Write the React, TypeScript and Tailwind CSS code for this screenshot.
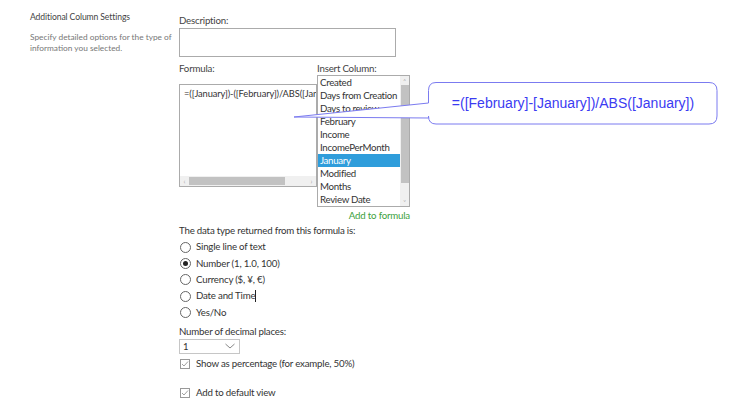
import React from "react";

const items = [
  "Created",
  "Days from Creation",
  "Days to review",
  "February",
  "Income",
  "IncomePerMonth",
  "January",
  "Modified",
  "Months",
  "Review Date",
];

const t = "text-[9.7px] tracking-[-0.2px]";

function Radio({ checked, label, cursor }: { checked?: boolean; label: string; cursor?: boolean }) {
  return (
    <div className="flex items-center h-[16.4px]">
      <span className="w-[11px] h-[11px] rounded-full border border-[#666] flex items-center justify-center ml-[1px]">
        {checked && <span className="w-[5px] h-[5px] rounded-full bg-[#222]" />}
      </span>
      <span className="ml-[5px] text-[9.7px] tracking-[-0.2px] text-[#333] leading-none">
        {label}
        {cursor && <span className="inline-block w-px h-[12px] bg-[#222] align-middle -mt-[2px]" />}
      </span>
    </div>
  );
}

function Check({ label }: { label: string }) {
  return (
    <div className="flex items-center">
      <span className="w-[10px] h-[10px] border border-[#999] ml-[1px] flex items-center justify-center">
        <svg width="8" height="8" viewBox="0 0 8 8">
          <path d="M1 4 L3 6 L7 1.5" fill="none" stroke="#888" strokeWidth="0.8" />
        </svg>
      </span>
      <span className="ml-[6px] text-[9.7px] tracking-[-0.2px] text-[#333] leading-none">{label}</span>
    </div>
  );
}

export default function App() {
  return (
    <div
      className="relative w-[736px] h-[409px] bg-white overflow-hidden flex"
      style={{ fontFamily: 'Lato, "Noto Sans", sans-serif' }}
    >
      <div className="w-[179px] pl-[30px] pt-[11px] shrink-0">
        <div className="text-[8.6px] tracking-[-0.1px] text-[#444] leading-[12px]">Additional Column Settings</div>
        <div className="mt-[9px] text-[8.3px] text-[#777] leading-[10.5px] w-[142px]">
          Specify detailed options for the type of information you selected.
        </div>
      </div>
      <div className={"flex flex-col pt-[13px] " + t}>
        <div className="text-[#444] leading-[14px]">Description:</div>
        <div className="mt-[1px] w-[217px] h-[29px] border border-[#ababab]" />
        <div className="mt-[4px] flex">
          <div className="flex flex-col w-[139px]">
            <div className="text-[#444] leading-[14px] h-[14px]">Formula:</div>
            <div className="mt-[9px] w-[138px] h-[103px] border border-[#ababab] flex flex-col">
              <div className="flex-1 overflow-hidden whitespace-nowrap text-[9.3px] tracking-[-0.1px] text-[#333] pl-[4px] pt-[3px] leading-[12px]">
                =([January])-([February])/ABS([January])
              </div>
              <div className="h-[10px] bg-[#f0f0f0] flex items-center">
                <span className="w-[9px] text-[7px] text-[#aaa] text-center leading-none">‹</span>
                <div className="w-[96px] h-[8px] bg-[#c2c2c2]" />
                <div className="flex-1" />
                <span className="w-[9px] text-[7px] text-[#aaa] text-center leading-none">›</span>
              </div>
            </div>
          </div>
          <div className="flex flex-col -ml-[1px]">
            <div className="text-[#444] leading-[14px] h-[14px]">Insert Column:</div>
            <div className="w-[93px] h-[132px] border border-[#ababab] flex">
              <div className="flex-1 flex flex-col overflow-hidden">
                {items.map((it) => (
                  <div
                    key={it}
                    className={
                      "h-[13px] leading-[13px] text-[9.7px] tracking-[-0.3px] whitespace-nowrap pl-[2px] " +
                      (it === "January" ? "bg-[#2f9ddb] text-white" : "text-[#333]")
                    }
                  >
                    {it}
                  </div>
                ))}
              </div>
              <div className="w-[9px] bg-[#f0f0f0] flex flex-col items-center">
                <span className="h-[9px] text-[6px] text-[#aaa] leading-[9px]">˄</span>
                <div className="w-[8px] flex-1 bg-[#c2c2c2] mb-[14px]" />
                <span className="h-[9px] text-[6px] text-[#aaa] leading-[9px]">˅</span>
              </div>
            </div>
            <div className="text-right text-[#3c9f3c] leading-[14px] mt-[1px]">Add to formula</div>
          </div>
        </div>
        <div className="mt-[1px] text-[#333] leading-[14px]">
          The data type returned from this formula is:
        </div>
        <div className="mt-[2px] flex flex-col">
          <Radio label="Single line of text" />
          <Radio checked label="Number (1, 1.0, 100)" />
          <Radio label="Currency ($, ¥, €)" />
          <Radio label="Date and Time" cursor />
          <Radio label="Yes/No" />
        </div>
        <div className="mt-[3px] text-[#333] leading-[14px]">Number of decimal places:</div>
        <div className="mt-[1px] w-[61px] h-[15px] border border-[#c6c6c6] flex items-center">
          <span className="flex-1 pl-[3px] text-[9.5px] text-[#333] leading-none">1</span>
          <svg width="12" height="8" viewBox="0 0 12 8" className="mr-[3px]">
            <path d="M1.5 2 L6 6 L10.5 2" fill="none" stroke="#888" strokeWidth="1" />
          </svg>
        </div>
        <div className="mt-[5px]">
          <Check label="Show as percentage (for example, 50%)" />
        </div>
        <div className="mt-[19px]">
          <Check label="Add to default view" />
        </div>
      </div>

      <svg
        className="absolute left-0 top-0 pointer-events-none"
        width="736"
        height="409"
        viewBox="0 0 736 409"
      >
        <path
          d="M436 82.5 H709 Q717 82.5 717 90.5 V116 Q717 124 709 124 H436 Q428.5 124 428.5 116 V118 L294 117 L428.5 103 V90.5 Q428.5 82.5 436 82.5 Z"
          fill="white"
          stroke="#7b7bf0"
          strokeWidth="1"
        />
      </svg>
      <div
        className="absolute left-[428px] top-[82px] w-[290px] h-[42px] flex items-center justify-center text-[14px] text-[#3b3bf2]"
        style={{ fontFamily: '"Liberation Sans", Arial, sans-serif' }}
      >
        =([February]-[January])/ABS([January])
      </div>
    </div>
  );
}
